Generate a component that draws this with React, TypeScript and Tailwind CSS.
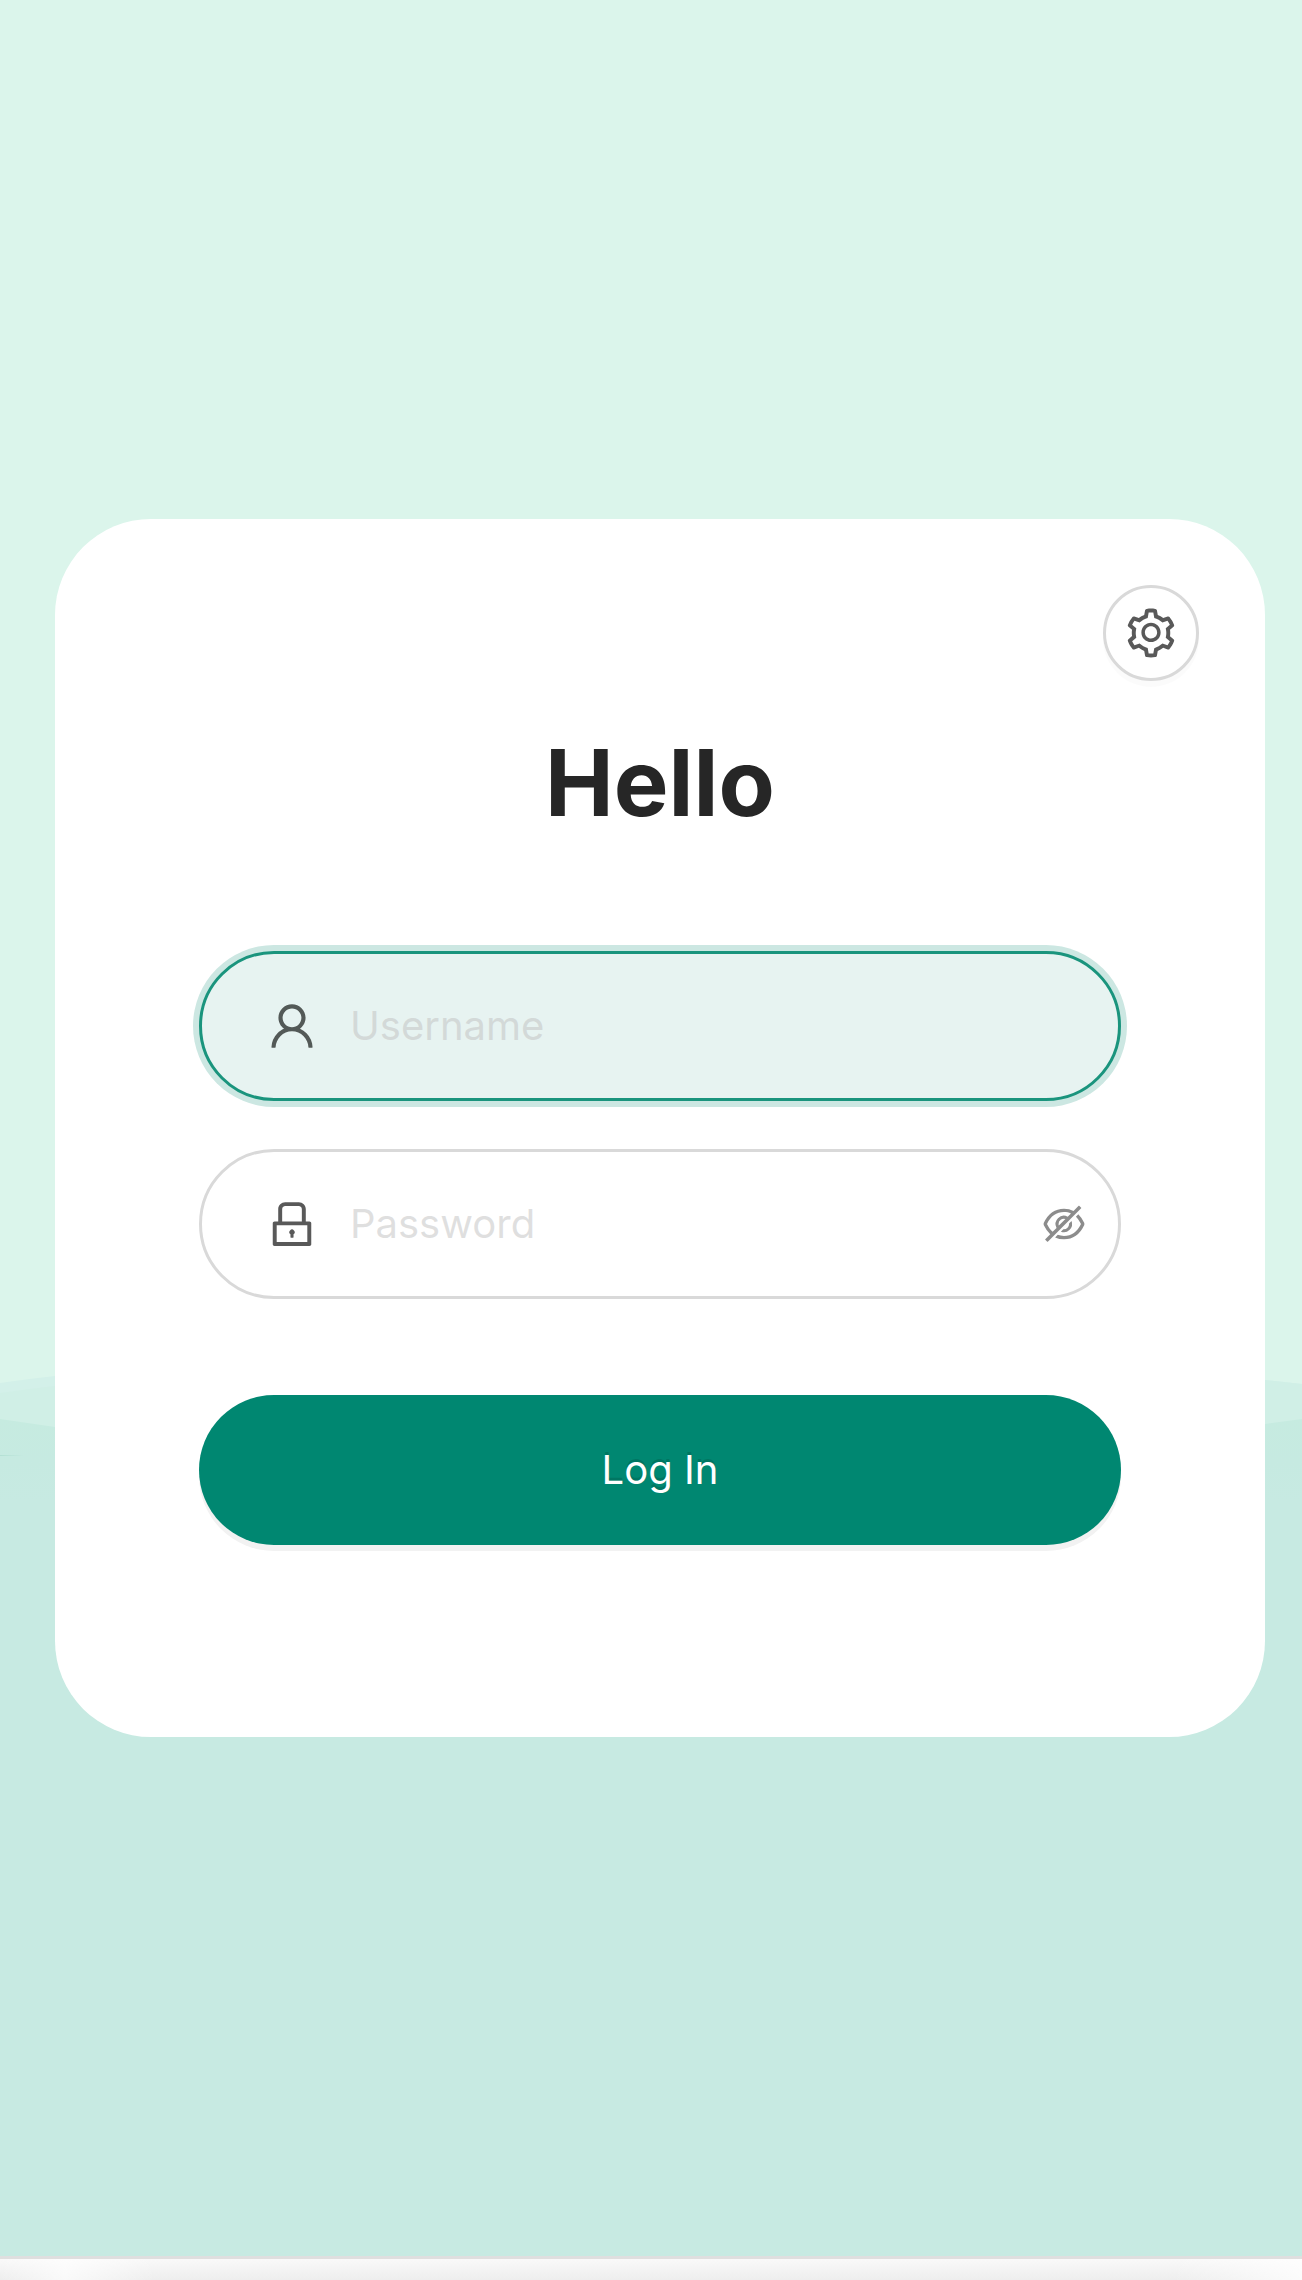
import { useState } from "react";
import { AiOutlineSetting, AiOutlineUser, AiOutlineLock, AiOutlineEyeInvisible, AiOutlineEye } from "react-icons/ai";

const fieldClass =
  "flex h-[150px] items-center gap-[30px] rounded-full border-3 border-[#d9d9d9] bg-white pl-[62px] pr-[30px] has-[input:focus]:border-[#1a947d] has-[input:focus]:bg-[#e7f3f1] has-[input:focus]:ring-6 has-[input:focus]:ring-[#cce7e2]";
const inputClass =
  "min-w-0 flex-1 bg-transparent text-[40px] leading-[66px] text-[#262626] caret-transparent outline-none placeholder:text-[#bfbfbf]/50";

function Waves() {
  return (
    <svg className="absolute inset-0 h-full w-full" viewBox="0 0 1302 2256" preserveAspectRatio="none" aria-hidden="true">
      <rect width="1302" height="2256" fill="#dbf5eb" />
      <path d="M0 1383 Q27 1379 55 1376 C400 1340 900 1345 1265 1380 L1302 1384 V2256 H0Z" fill="#d3f0e9" />
      <path d="M0 1393 Q27 1389 55 1386 C400 1350 900 1345 1265 1380 L1302 1384 V2256 H0Z" fill="#d0efe6" />
      <path d="M0 1419 L55 1427 C400 1470 900 1475 1265 1424 L1302 1419 V2256 H0Z" fill="url(#deep)" />
      <path d="M0 1455 L24 1455.5 L0 1456Z" fill="#b4e0d4" />
      <defs>
        <linearGradient id="deep" x1="0" y1="0" x2="0" y2="1">
          <stop offset="0" stopColor="#c6ebe0" />
          <stop offset="0.05" stopColor="#c6eae1" />
          <stop offset="0.1" stopColor="#c7eae2" />
        </linearGradient>
      </defs>
    </svg>
  );
}

export default function App() {
  const [form, setForm] = useState({ username: "", password: "" });
  const [visible, setVisible] = useState(false);

  return (
    <div className="flex min-h-screen flex-col font-['Inter',sans-serif]">
      <main className="relative flex flex-1 items-center pl-[55px] pr-[37px]">
        <Waves />
        <div className="relative w-full rounded-[96px] bg-white px-[66px] pt-[66px] pb-48">
          <div className="flex justify-end">
            <button
              type="button"
              aria-label="Settings"
              className="flex size-24 items-center justify-center rounded-full border-3 border-[#d9d9d9] bg-white text-[#595959] shadow-[0_6px_0_rgba(0,0,0,0.015)]"
            >
              <AiOutlineSetting size={56} />
            </button>
          </div>
          <h1 className="mt-[42px] text-center text-[92px] leading-[120px] font-bold text-[#262626]">Hello</h1>
          <form onSubmit={(e) => e.preventDefault()} className="mt-[108px] flex flex-col gap-12 px-[78px]">
            <div className={fieldClass}>
              <label htmlFor="username" aria-label="Username">
                <AiOutlineUser size={56} color="#535957" />
              </label>
              <input
                id="username"
                autoFocus
                placeholder="Username"
                value={form.username}
                onChange={(e) => setForm({ ...form, username: e.target.value })}
                className={inputClass}
              />
            </div>
            <div className={fieldClass}>
              <label htmlFor="password" aria-label="Password">
                <AiOutlineLock size={56} color="#595959" />
              </label>
              <input
                id="password"
                type={visible ? "text" : "password"}
                placeholder="Password"
                value={form.password}
                onChange={(e) => setForm({ ...form, password: e.target.value })}
                className={inputClass}
              />
              <button type="button" aria-label="Toggle password" onClick={() => setVisible(!visible)} className="text-[#8c8c8c]">
                {visible ? <AiOutlineEye size={48} /> : <AiOutlineEyeInvisible size={48} />}
              </button>
            </div>
            <button
              type="submit"
              className="mt-12 h-[150px] rounded-full bg-[#008771] text-[40px] leading-[66px] text-white shadow-[0_6px_0_#f2f2f2] [text-shadow:0_-3px_0_rgba(0,0,0,0.12)]"
            >
              Log In
            </button>
          </form>
        </div>
      </main>
      <footer className="h-6 border-t-3 border-[#dfdfdf] bg-linear-to-b from-[#f9f9f9] to-[#eeeeee]">
        <div className="h-full bg-linear-to-r from-transparent via-white/70 via-5% to-transparent to-12%">
          <div className="h-full bg-linear-to-r from-transparent from-90% to-white/80" />
        </div>
      </footer>
    </div>
  );
}
